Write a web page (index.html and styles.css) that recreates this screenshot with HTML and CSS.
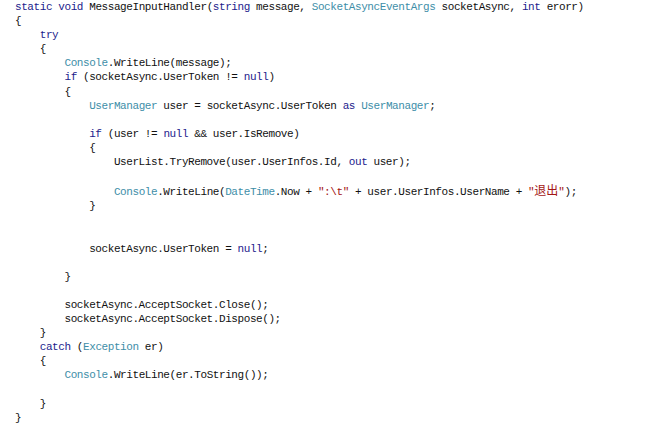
FILE: index.html
```html
<!DOCTYPE html>
<html>
<head>
    <link rel="stylesheet" href="styles.css">
</head>
<body>
<pre class="code"><span class="kw">static</span> <span class="kw">void</span> MessageInputHandler(<span class="kw">string</span> message, <span class="type">SocketAsyncEventArgs</span> socketAsync, <span class="kw">int</span> erorr)
{
    <span class="kw">try</span>
    {
        <span class="type">Console</span>.WriteLine(message);
        <span class="kw">if</span> (socketAsync.UserToken != <span class="kw">null</span>)
        {
            <span class="type">UserManager</span> user = socketAsync.UserToken <span class="kw">as</span> <span class="type">UserManager</span>;

            <span class="kw">if</span> (user != <span class="kw">null</span> &amp;&amp; user.IsRemove)
            {
                UserList.TryRemove(user.UserInfos.Id, <span class="kw">out</span> user);

                <span class="type">Console</span>.WriteLine(<span class="type">DateTime</span>.Now + <span class="str">":\t"</span> + user.UserInfos.UserName + <span class="str">"<span class="cjk">退出</span>"</span>);
            }


            socketAsync.UserToken = <span class="kw">null</span>;

        }

        socketAsync.AcceptSocket.Close();
        socketAsync.AcceptSocket.Dispose();
    }
    <span class="kw">catch</span> (<span class="type">Exception</span> er)
    {
        <span class="type">Console</span>.WriteLine(er.ToString());

    }
}</pre>
</body>
</html>
```

FILE: styles.css
```css
body {
    margin: 0;
    background: #fff;
}
.code {
    margin: 0;
    padding: 0 0 0 15px;
    font-family: "Liberation Mono", "DejaVu Sans Mono", monospace;
    font-size: 11px;
    letter-spacing: -0.42px;
    line-height: 14.1px;
    color: #111;
}
.kw {
    color: #1c1c8c;
}
.type {
    color: #3e8ea8;
}
.str {
    color: #a31515;
}
.cjk {
    font-family: "Noto Sans CJK SC", sans-serif;
    font-size: 12px;
    letter-spacing: 0;
}
```
